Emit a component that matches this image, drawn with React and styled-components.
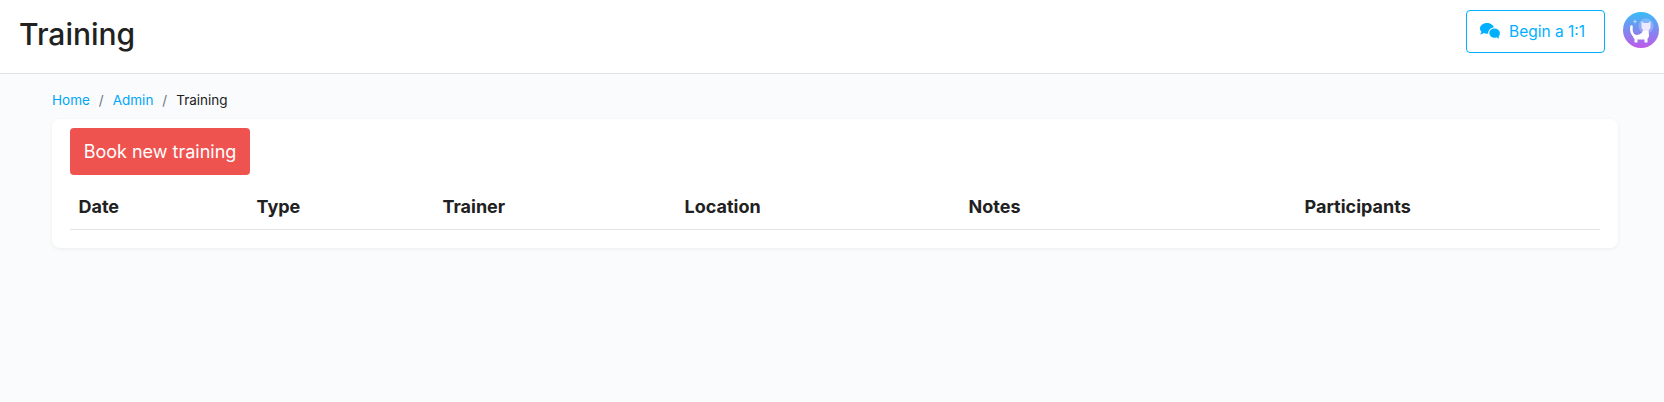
import React from "react";
import styled, { createGlobalStyle } from "styled-components";

const Global = createGlobalStyle`
  html, body { margin: 0; padding: 0; background: #fafbfd; }
  body { font-family: Inter, "Liberation Sans", sans-serif; color: #212121; }
`;
const Page = styled.div`
  min-height: 402px;
  background: #fafbfd;
`;
const Header = styled.header`
  height: 73px;
  background: #fff;
  border-bottom: 1px solid #e2e3e5;
  display: flex;
  align-items: flex-start;
  justify-content: space-between;
  padding: 0 5px 0 19px;
`;
const Title = styled.h1`
  margin: 16px 0 0;
  font-size: 30px;
  line-height: 36px;
  font-weight: 540;
  color: #212121;
`;
const Actions = styled.div`
  display: flex;
  align-items: flex-start;
  gap: 18px;
  padding-top: 10px;
`;
const OneOnOne = styled.button`
  width: 139px;
  height: 43px;
  background: #fff;
  border: 1px solid #00b0ff;
  border-radius: 4px;
  color: #00b0ff;
  font: 400 15.5px Inter, sans-serif;
  display: flex;
  align-items: center;
  justify-content: flex-start;
  gap: 8px;
  padding: 0 0 0 13px;
`;
const AvatarWrap = styled.div`
  margin-top: 2px;
  width: 36px;
  height: 36px;
`;
const Main = styled.main`
  padding: 16px 46px 0 52px;
`;
const Crumbs = styled.nav`
  display: flex;
  font-size: 13.5px;
  line-height: 20px;
  height: 20px;
  margin-bottom: 9px;
`;
const Crumb = styled.a`
  color: #00a6f8;
  text-decoration: none;
`;
const Current = styled.span`
  color: #212121;
`;
const Sep = styled.span`
  color: #6b7280;
  margin: 0 9px;
`;
const Card = styled.section`
  background: #fff;
  border-radius: 8px;
  box-shadow: 0 1px 4px rgba(0, 0, 0, 0.06);
  padding: 9px 18px 18px;
  height: 129px;
  box-sizing: border-box;
`;
const Primary = styled.button`
  width: 180px;
  height: 47px;
  background: #ef5350;
  border: 0;
  border-radius: 4px;
  color: #fff;
  font: 400 18px Inter, sans-serif;
  padding: 0;
  display: block;
`;
const Table = styled.table`
  width: 100%;
  margin-top: 9px;
  border-collapse: separate;
  border-spacing: 0;
  table-layout: fixed;
`;
const Th = styled.th`
  text-align: left;
  width: ${(p) => p.$w}px;
  padding: 8px 8px 9px 8.5px;
  height: 46px;
  box-sizing: border-box;
  font-size: 18px;
  font-weight: 650;
  color: #212121;
  border-bottom: 1px solid #e2e3e5;
`;

const cols = [
  ["Date", 178],
  ["Type", 186],
  ["Trainer", 242],
  ["Location", 284],
  ["Notes", 336],
  ["Participants", 304],
];

const Chat = () => (
  <svg width="21" height="17" viewBox="0 0 21 17" aria-hidden="true">
    <path
      d="M7 0C3.100 0 0 2.400 0 5.500c0 1.300.6 2.500 1.500 3.400C1.200 9.900.6 10.700 0 11.400c1.500 0 2.900-.6 3.800-1.300.9.400 2 .6 3.200.6 3.900 0 7-2.300 7-5.200S10.900 0 7 0z"
      fill="currentColor"
    />
    <path
      d="M14.500 4.800c-3.200 0-5.800 2.400-5.800 5.300s2.600 5.300 5.800 5.300c.7 0 1.400-.1 2-.4.9.8 2.600 1.600 4.200 1.600-.6-.6-1.300-1.700-1.500-2.700.9-1 1.300-2.400 1.300-3.800 0-2.900-2.800-5.300-6-5.300z"
      fill="currentColor"
      stroke="#fff"
      strokeWidth="1.200"
    />
  </svg>
);

const Avatar = () => (
  <svg width="36" height="36" viewBox="0 0 36 36" aria-label="avatar">
    <defs>
      <linearGradient id="av" x1="0" y1="0" x2="0" y2="1">
        <stop offset="0" stopColor="#38bdf8" />
        <stop offset="1" stopColor="#c05ae8" />
      </linearGradient>
    </defs>
    <circle cx="18" cy="18" r="18" fill="url(#av)" />
    <circle cx="23" cy="14" r="7.500" fill="#fff" fillOpacity="0.22" />
    <path d="M8.500 14.500c-.5 4 0 8 3.500 9.500" fill="none" stroke="#fff" strokeWidth="2.600" strokeLinecap="round" />
    <path
      d="M10.500 22.500c3 1 6 .5 8-1.500l2-3h5l.5 5.500c0 1.500-.7 2.500-1.500 3v4h-3v-3h-7v3h-3v-3.500c-1.500-1-1.700-3-1-5z"
      fill="#fff"
    />
    <path d="M18.500 9l2.200 2h4.600l2.200-2v6c0 2.200-2 4-4.500 4s-4.500-1.800-4.500-4z" fill="#efe9ff" />
    <path d="M12 7l.7 1.900 1.800.6-1.800.7-.7 1.800-.7-1.800-1.800-.7 1.800-.6z" fill="#fff" fillOpacity="0.55" />
  </svg>
);

export default function App() {
  return (
    <Page>
      <Global />
      <Header>
        <Title>Training</Title>
        <Actions>
          <OneOnOne>
            <Chat />
            Begin a 1:1
          </OneOnOne>
          <AvatarWrap>
            <Avatar />
          </AvatarWrap>
        </Actions>
      </Header>
      <Main>
        <Crumbs>
          <Crumb href="#">Home</Crumb>
          <Sep>/</Sep>
          <Crumb href="#">Admin</Crumb>
          <Sep>/</Sep>
          <Current>Training</Current>
        </Crumbs>
        <Card>
          <Primary>Book new training</Primary>
          <Table>
            <thead>
              <tr>
                {cols.map(([name, w]) => (
                  <Th key={name} $w={w}>{name}</Th>
                ))}
              </tr>
            </thead>
          </Table>
        </Card>
      </Main>
    </Page>
  );
}
